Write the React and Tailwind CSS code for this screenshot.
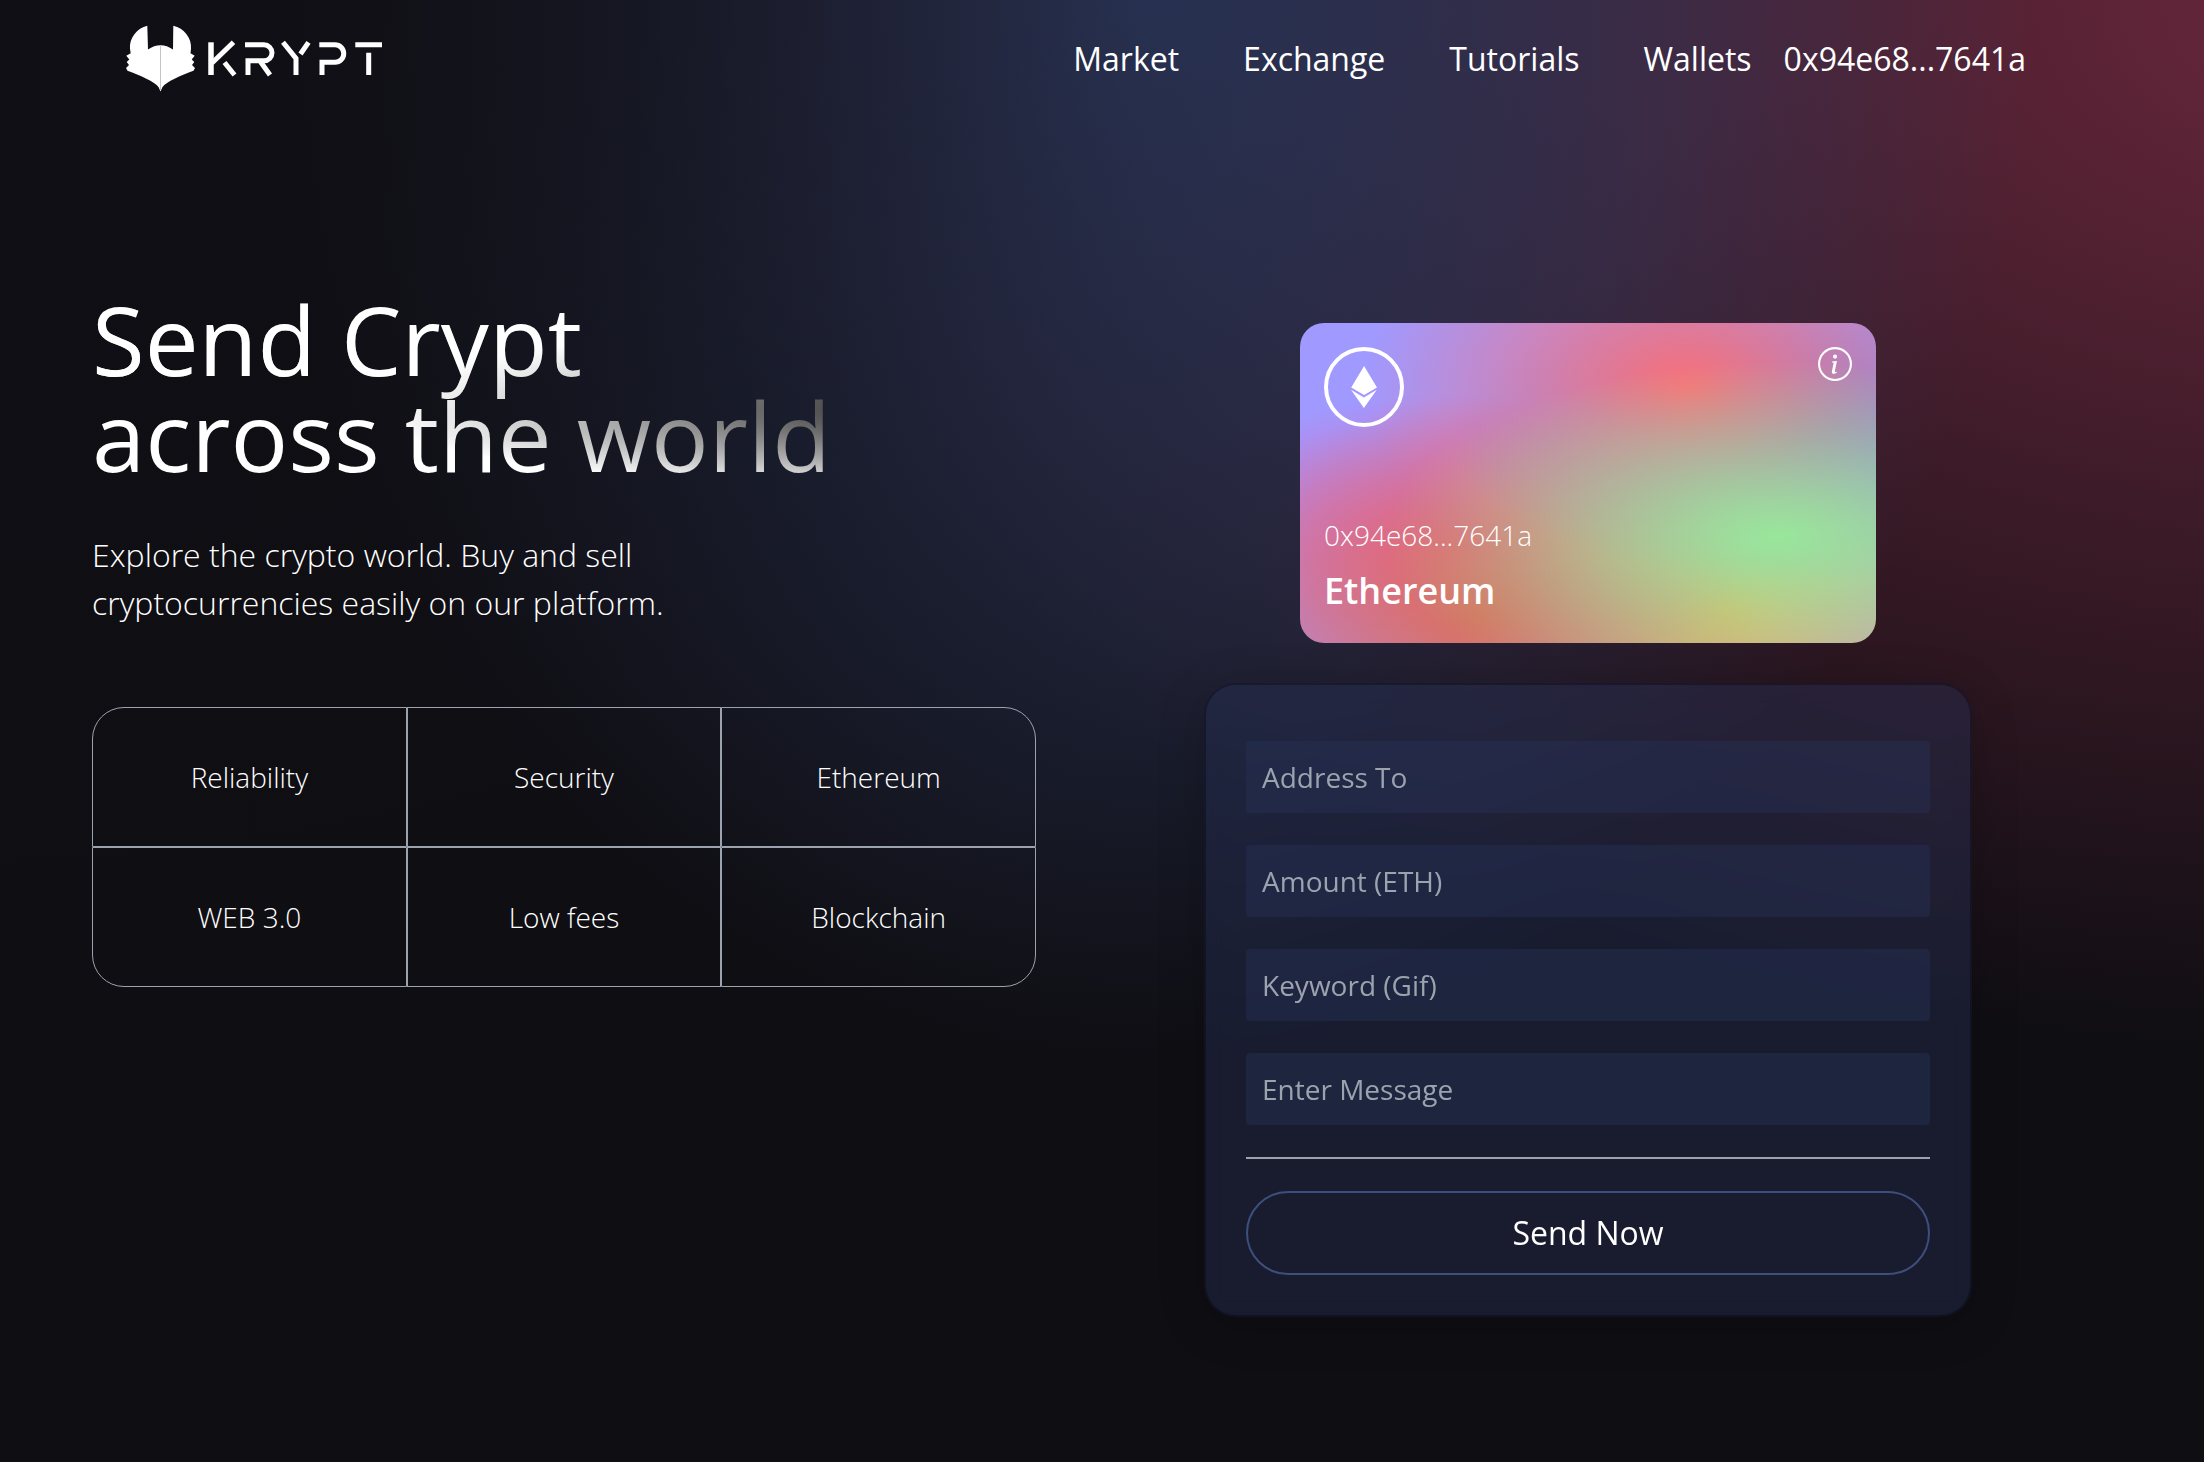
import { BsInfoCircle } from "react-icons/bs";
import { SiEthereum } from "react-icons/si";

const navLinks = ["Market", "Exchange", "Tutorials", "Wallets"];

const features = [
  { label: "Reliability", corner: "rounded-tl-[32px]" },
  { label: "Security", corner: "" },
  { label: "Ethereum", corner: "rounded-tr-[32px]" },
  { label: "WEB 3.0", corner: "rounded-bl-[32px]" },
  { label: "Low fees", corner: "" },
  { label: "Blockchain", corner: "rounded-br-[32px]" },
];

const fields = [
  { name: "addressTo", label: "Address To", type: "text" },
  { name: "amount", label: "Amount (ETH)", type: "number" },
  { name: "keyword", label: "Keyword (Gif)", type: "text" },
  { name: "message", label: "Enter Message", type: "text" },
];

function Logo() {
  return (
    <svg viewBox="0 -1 258 70" className="h-[70px] w-[258px]" role="img" aria-label="Krypt">
      <path
        fill="#fff"
        d="M21.300 0.700 C11 3 3 13 4 24 L4.700 28.300 L0.300 30.700 L3.300 34.500 L0.700 37 L3 40 L0 43 L1.500 45.700 C14 50 29 57 32.500 62 L34.500 66.500 L36.500 62 C40 57 55 50 67.500 45.700 L69 43 L66 40 L68.300 37 L65.700 34.500 L68.700 30.700 L64.500 28.300 L65 24 C66 13 58 3 47.300 0.700 L47 24.500 C39 18.800 30 18.800 22 24.500 Z"
      />
      <path d="M34.500 20 V65" stroke="#c4c4c8" strokeWidth="1" />
      <g fill="none" stroke="#fff" strokeWidth="5">
        <path d="M85 17.300 V50" strokeWidth="5.500" />
        <path d="M107.500 17.300 L86 38" strokeWidth="5" />
        <path d="M98.500 37.500 L108.500 50" />
        <path d="M119 19.800 H138 A8 8 0 0 1 138 35.800 H122 V50 M134 36 L144 50" />
        <path d="M157 17.300 L170 33.500 V50 M182.500 17.300 L174.500 29" />
        <path d="M193.300 19.800 H209 A8.750 8.750 0 0 1 209 37.300 H196 V50" />
        <path d="M229.300 19.800 H256 M242.700 27.700 V50" />
      </g>
    </svg>
  );
}

function Header() {
  return (
    <header className="flex items-center justify-between pl-[126px] pr-[178px] pt-6">
      <a href="#home">
        <Logo />
      </a>
      <nav className="flex items-center text-[32px] leading-[48px]">
        <ul className="flex gap-16">
          {navLinks.map((link) => (
            <li key={link}>
              <a href="#">{link}</a>
            </li>
          ))}
        </ul>
        <a href="#account" className="ml-8">
          0x94e68...7641a
        </a>
      </nav>
    </header>
  );
}

function EthCard() {
  return (
    <section className="flex h-80 w-[576px] flex-col justify-between rounded-3xl bg-[#a099ff] bg-[radial-gradient(at_83%_67%,rgb(152,231,156)_0,transparent_58%),radial-gradient(at_67%_20%,hsla(357,94%,71%,1)_0,transparent_59%),radial-gradient(at_88%_35%,hsla(222,81%,65%,1)_0,transparent_50%),radial-gradient(at_31%_91%,hsla(9,61%,61%,1)_0,transparent_52%),radial-gradient(at_27%_71%,hsla(336,91%,65%,1)_0,transparent_49%),radial-gradient(at_74%_89%,hsla(30,98%,65%,1)_0,transparent_51%),radial-gradient(at_53%_75%,hsla(174,94%,68%,1)_0,transparent_45%)] p-6">
      <div className="flex items-start justify-between">
        <div className="flex size-20 items-center justify-center rounded-full border-4 border-white">
          <SiEthereum className="size-[42px]" />
        </div>
        <button type="button" aria-label="Card information">
          <BsInfoCircle className="size-[34px]" />
        </button>
      </div>
      <div>
        <p className="text-[28px] font-light leading-10">0x94e68...7641a</p>
        <p className="mt-2 text-4xl font-semibold leading-[56px]">Ethereum</p>
      </div>
    </section>
  );
}

function TransferForm() {
  return (
    <form className="mt-10 flex w-[768px] flex-col rounded-[32px] border-2 border-black/30 bg-[#273359]/40 p-10 shadow-[0_8px_48px_rgba(0,0,0,0.2)] backdrop-blur-[10px]">
      {fields.map((field) => (
        <input
          key={field.name}
          name={field.name}
          type={field.type}
          aria-label={field.label}
          placeholder={field.label}
          className="my-4 h-[72px] w-full rounded-sm bg-[#273359]/40 px-4 text-[28px] leading-10 outline-none placeholder:text-[#9ca3af]"
        />
      ))}
      <hr className="my-4 border-t-2 border-[#9ca3af]" />
      <button
        type="button"
        className="mt-4 h-[84px] w-full rounded-full border-2 border-[#3d4f7c] text-[32px] leading-[48px]"
      >
        Send Now
      </button>
    </form>
  );
}

export default function App() {
  return (
    <div className="min-h-screen bg-[#0f0e13] bg-[radial-gradient(at_0%_0%,hsla(253,16%,7%,1)_0,transparent_50%),radial-gradient(at_50%_0%,hsla(225,37%,30%,1)_0,transparent_50%),radial-gradient(at_100%_0%,hsla(341,46%,29%,1)_0,transparent_50%)] bg-size-[114%_102%] bg-position-[36%_0%] font-['Open_Sans',sans-serif] text-white">
      <Header />
      <main className="flex items-start justify-between pl-[92px] pr-[232px] pt-[189px]">
        <section className="flex flex-col">
          <h1 className="bg-white bg-[radial-gradient(at_4%_36%,hsla(0,0%,100%,1)_0,transparent_53%),radial-gradient(at_100%_60%,rgb(0,0,0)_0,transparent_50%)] bg-clip-text py-2 text-8xl leading-none text-transparent">
            Send Crypt
            <br />
            across the world
          </h1>
          <p className="mt-10 text-[32px] font-light leading-[48px]">
            Explore the crypto world. Buy and sell
            <br />
            cryptocurrencies easily on our platform.
          </p>
          <ul className="mt-20 grid w-[944px] grid-cols-3">
            {features.map(({ label, corner }) => (
              <li
                key={label}
                className={`flex h-[140px] items-center justify-center border border-[#9ca3af] text-[28px] font-light leading-10 ${corner}`}
              >
                {label}
              </li>
            ))}
          </ul>
        </section>
        <section className="flex flex-col items-center pt-10">
          <EthCard />
          <TransferForm />
        </section>
      </main>
    </div>
  );
}
